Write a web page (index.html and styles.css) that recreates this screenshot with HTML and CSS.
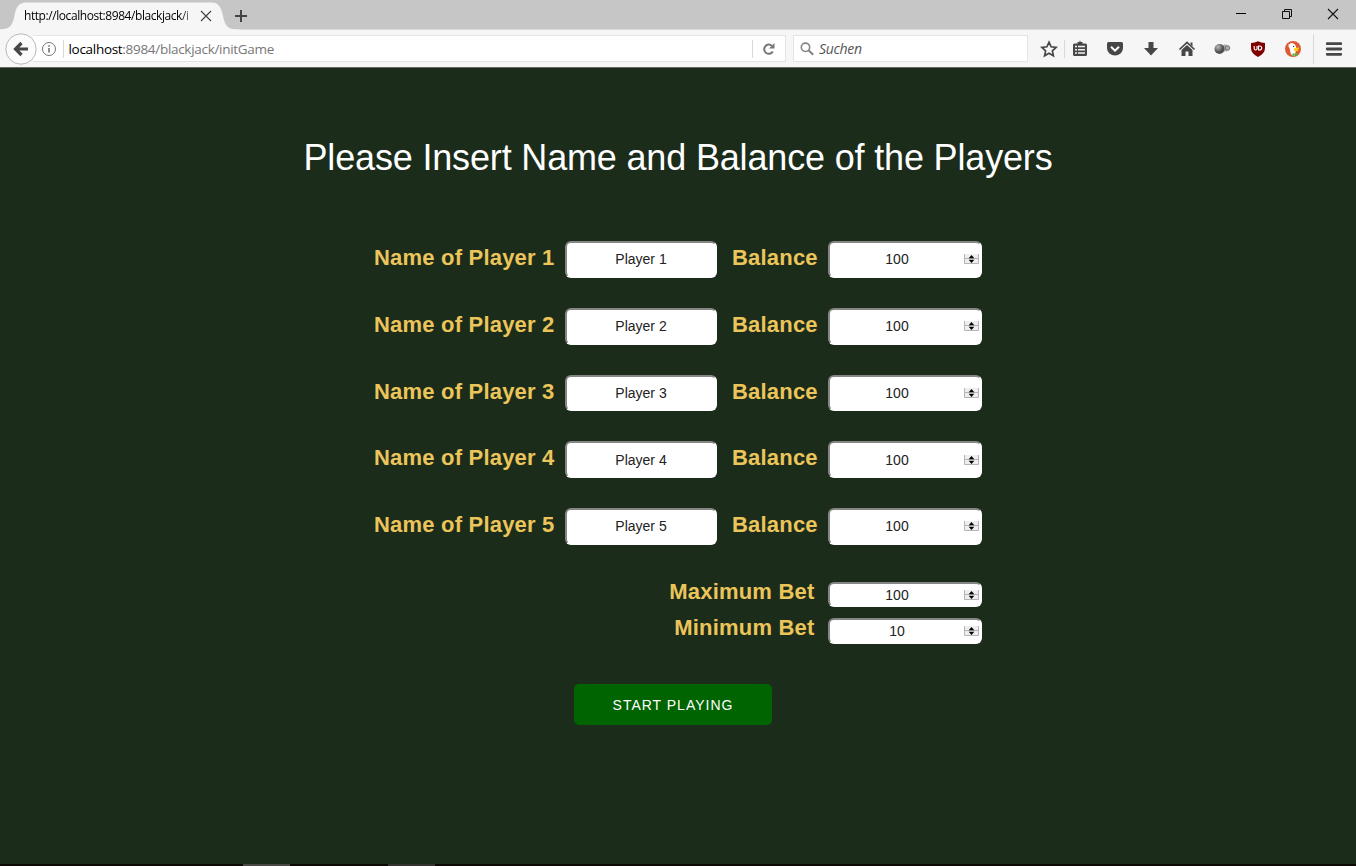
FILE: index.html
```html
<!DOCTYPE html>
<html lang="en">
<head>
<meta charset="utf-8">
<title>Blackjack</title>
<link rel="stylesheet" href="styles.css">
</head>
<body>
<header class="tabs">
  <svg class="tab-shape" width="240" height="30" viewBox="0 0 240 30"><path d="M0 30V29.5C9 29.500 12 26 14 18C16 7 18 2.500 27 2.500H211C219 2.500 221 7 223 16C225 26 228 29.500 237 29.500H240V30Z" fill="#f6f6f6"/></svg>
  <span class="tab-title">http://localhost:8984/blackjack/i</span>
  <svg class="tab-close" width="12" height="12" viewBox="0 0 12 12"><path d="M1 1l10 10M11 1L1 11" stroke="#444" stroke-width="1.2"/></svg>
  <svg class="tab-new" width="14" height="14" viewBox="0 0 14 14"><path d="M7 1v12M1 7h12" stroke="#444" stroke-width="2"/></svg>
  <div class="window-buttons">
    <svg width="12" height="12" viewBox="0 0 12 12"><path d="M1 5.500h10" stroke="#000"/></svg>
    <svg width="12" height="12" viewBox="0 0 12 12"><path d="M1.500 3.500h7v7h-7zM3.500 3.500v-2h7v7h-2" fill="none" stroke="#111"/></svg>
    <svg width="12" height="12" viewBox="0 0 12 12"><path d="M1 1l10 10M11 1L1 11" stroke="#111" stroke-width="1.100"/></svg>
  </div>
</header>
<nav class="toolbar">
  <svg class="back" width="32" height="32" viewBox="0 0 32 32"><circle cx="16" cy="16" r="15.200" fill="#fbfbfb" stroke="#b9b9b9"/><path d="M16.500 10L10.500 16l6 6M11.500 16H23" fill="none" stroke="#474747" stroke-width="3.200"/></svg>
  <div class="address">
    <svg class="info" width="16" height="16" viewBox="0 0 16 16"><circle cx="8" cy="8" r="6.500" fill="none" stroke="#777"/><path d="M8 7v4.500M8 4.300v1.500" stroke="#666" stroke-width="1.500"/></svg>
    <i class="line info-line"></i>
    <span class="url"><b>localhost</b>:8984/blackjack/initGame</span>
    <i class="line reload-line"></i>
    <svg class="reload" width="14" height="14" viewBox="0 0 14 14"><path d="M10.800 9.500A4.600 4.600 0 1 1 10 3.900" fill="none" stroke="#777" stroke-width="2"/><path d="M12.500 1v5.500H7z" fill="#777"/></svg>
  </div>
  <div class="search">
    <svg width="14" height="14" viewBox="0 0 14 14"><circle cx="5.500" cy="5.300" r="4.200" fill="none" stroke="#858585" stroke-width="1.600"/><path d="M8.500 8.300l4.700 4.400" stroke="#858585" stroke-width="2.200"/></svg>
    <span class="search-text">Suchen</span>
  </div>
  <div class="tools">
    <svg width="18" height="18" viewBox="0 0 18 18"><path d="M9 2.200l2.100 4.600 5 .6-3.700 3.400 1 5L9 13.300l-4.400 2.500 1-5L1.900 7.400l5-.6z" fill="none" stroke="#474747" stroke-width="1.700"/></svg>
    <svg width="18" height="18" viewBox="0 0 18 18"><path d="M3.500 3.500H6.500V2h2V.8h1V2h2v1.500h3Q16 3.500 16 5v9.500q0 1.500-1.500 1.500h-11Q2 16 2 14.500V5Q2 3.500 3.500 3.500z" fill="#474747"/><path d="M4 6.600h2M7 6.600h7M4 9.800h2M7 9.800h7M4 13h2M7 13h7" stroke="#f3f3f3" stroke-width="1.500"/></svg>
    <svg width="18" height="18" viewBox="0 0 18 18"><path d="M2.500 2h13Q17 2 17 3.500V8A8 7.500 0 0 1 1 8V3.500Q1 2 2.500 2z" fill="#474747"/><path d="M5 6.800l4 3.900 4-3.900" fill="none" stroke="#fff" stroke-width="2"/></svg>
    <svg width="18" height="18" viewBox="0 0 18 18"><path d="M6.500 2h5v6H16l-7 7.500L2 8h4.500z" fill="#474747"/></svg>
    <svg width="18" height="18" viewBox="0 0 18 18"><path d="M1.500 9.500L9 2.500l7.500 7" fill="none" stroke="#474747" stroke-width="1.700"/><path d="M3.500 10L9 5l5.500 5v6h-4v-4.500h-3V16h-4zM12.500 2.500h2v4l-2-2z" fill="#474747"/></svg>
    <svg width="18" height="18" viewBox="0 0 18 18"><defs><radialGradient id="ball" cx=".35" cy=".3"><stop offset="0" stop-color="#bbb"/><stop offset="1" stop-color="#505050"/></radialGradient></defs><circle cx="12" cy="8" r="3.500" fill="#aaa"/><circle cx="6.500" cy="9" r="5" fill="url(#ball)"/><circle cx="14.500" cy="8" r="2.300" fill="#aaa" stroke="#777"/></svg>
    <svg width="18" height="18" viewBox="0 0 18 18"><path d="M9 1.200q3 1.800 7 1.800v5q0 5.500-7 9-7-3.500-7-9V3q4 0 7-1.800z" fill="#800000"/><path d="M5.200 6v2.500q0 1.500 1.400 1.500T8 8.500V6M9.500 6v4h1q2.200 0 2.200-2t-2.200-2z" fill="none" stroke="#fff" stroke-width="1.100"/></svg>
    <svg width="18" height="18" viewBox="0 0 18 18"><circle cx="9" cy="9" r="8" fill="#de5833"/><path d="M4.500 4.500Q8 1.500 11 4.500q1.500 1.800 1 5l-.5 3-1 3.500Q6.500 16 6.200 11 6 8 4.500 6.500z" fill="#fff"/><circle cx="9.500" cy="6.500" r=".7" fill="#345"/><path d="M10 8.300l5-.8v1.200L13 9.500l2 .4-1.500 1.300-3.500-.4z" fill="#fdd20a"/><path d="M8.500 13l2.500 1 2.500-1v3l-2.500-.8-2.500 1z" fill="#4cba3c"/></svg>
    <svg width="18" height="18" viewBox="0 0 18 18"><path d="M2.200 3.700h13.600M2.200 9h13.600M2.200 14.300h13.600" stroke="#474747" stroke-width="2.800" stroke-linecap="round"/></svg>
    <i class="line star-line"></i>
    <i class="line menu-line"></i>
  </div>
</nav>
<main class="page">
  <h1 class="heading">Please Insert Name and Balance of the Players</h1>
  <form class="players">
    <div class="row"><label class="label">Name of Player 1</label><input class="field" value="Player 1"><label class="label balance">Balance</label><span class="number"><input class="field" value="100"><svg class="spin" width="15" height="10" viewBox="0 0 15 10"><use href="#spinner"/></svg></span></div>
    <div class="row"><label class="label">Name of Player 2</label><input class="field" value="Player 2"><label class="label balance">Balance</label><span class="number"><input class="field" value="100"><svg class="spin" width="15" height="10" viewBox="0 0 15 10"><use href="#spinner"/></svg></span></div>
    <div class="row"><label class="label">Name of Player 3</label><input class="field" value="Player 3"><label class="label balance">Balance</label><span class="number"><input class="field" value="100"><svg class="spin" width="15" height="10" viewBox="0 0 15 10"><use href="#spinner"/></svg></span></div>
    <div class="row"><label class="label">Name of Player 4</label><input class="field" value="Player 4"><label class="label balance">Balance</label><span class="number"><input class="field" value="100"><svg class="spin" width="15" height="10" viewBox="0 0 15 10"><use href="#spinner"/></svg></span></div>
    <div class="row"><label class="label">Name of Player 5</label><input class="field" value="Player 5"><label class="label balance">Balance</label><span class="number"><input class="field" value="100"><svg class="spin" width="15" height="10" viewBox="0 0 15 10"><use href="#spinner"/></svg></span></div>
    <div class="bet"><label class="label">Maximum Bet</label><span class="number"><input class="field" value="100"><svg class="spin" width="15" height="10" viewBox="0 0 15 10"><use href="#spinner"/></svg></span></div>
    <div class="bet"><label class="label">Minimum Bet</label><span class="number"><input class="field" value="10"><svg class="spin" width="15" height="10" viewBox="0 0 15 10"><use href="#spinner"/></svg></span></div>
    <button class="start" type="button">START PLAYING</button>
  </form>
</main>
<footer class="taskbar"><i class="task task-active"></i><i class="task task-open"></i></footer>
<svg width="0" height="0" class="symbols"><symbol id="spinner" viewBox="0 0 15 10"><path d="M.5 0v9.500h14V0M.5 4.500h14" fill="#eee" stroke="#b5b5b5"/><path d="M7.500 1L10.300 4.300H4.700zM4.700 5.700h5.600L7.500 9z" fill="#000"/></symbol></svg>
</body>
</html>
```
FILE: styles.css
```css
* { box-sizing: border-box; }
body { margin: 0; height: 866px; overflow: hidden; display: flex; flex-direction: column; background: #1b2c1b; font-family: "Liberation Sans", Arial, sans-serif; }
svg { display: block; flex: none; }
.symbols { position: absolute; }
.tabs { position: relative; display: flex; align-items: center; height: 30px; background: #c6c6c6; border-bottom: 1px solid #dcdcdc; flex: none; }
.tab-shape { position: absolute; left: 0; top: 0; }
.tab-title { position: relative; margin: 3px 0 0 24px; width: 168px; white-space: nowrap; font: 12px/18px "Open Sans", sans-serif; letter-spacing: -0.43px; color: #000; -webkit-mask-image: linear-gradient(90deg, #000 156px, transparent 175px); mask-image: linear-gradient(90deg, #000 156px, transparent 175px); }
.tab-close { position: relative; margin: 2px 0 0 8px; }
.tab-new { margin: 2px 0 0 22px; }
.window-buttons { display: flex; gap: 34px; margin: 0 17px 0 auto; }
.window-buttons svg { position: relative; top: -1px; }
.toolbar { display: flex; align-items: center; height: 38px; padding: 0 0 0 5px; background: #f6f6f6; flex: none; border-bottom: 1px solid #626a62; }
.back { position: relative; z-index: 1; }
.address { display: flex; align-items: center; width: 753px; height: 27px; margin-left: -4px; padding-left: 8px; background: #fff; border: 1px solid #e4e4e4; border-left: 0; }
.line { width: 1px; height: 18px; background: #d9d9d9; flex: none; }
.info-line { margin-left: 6px; }
.url { margin: 1px 0 0 4.500px; font: 13.500px/20px "Open Sans", sans-serif; letter-spacing: -0.3px; color: #777; white-space: nowrap; }
.url b { font-weight: 400; color: #000; }
.reload-line { margin-left: auto; }
.reload { margin: 0 9px 0 9px; }
.search { display: flex; align-items: center; width: 235px; height: 27px; margin-left: 7px; padding-left: 6px; background: #fff; border: 1px solid #e4e4e4; }
.search-text { margin: 1px 0 0 5px; font: italic 14px/20px "Open Sans", sans-serif; letter-spacing: -0.3px; color: #555; }
.tools { position: relative; display: flex; gap: 17.600px; margin-left: 12px; }
.tools svg:first-child { margin-right: -4.800px; }
.tools svg:nth-child(9) { margin-left: 5.500px; }
.star-line { position: absolute; left: 24px; top: 0; }
.menu-line { position: absolute; left: 273px; top: -6px; height: 30px; }
.page { flex: 1; display: flex; flex-direction: column; align-items: center; padding-top: 69px; }
.heading { margin: 0; width: 749px; font-size: 36px; line-height: 42px; font-weight: 400; letter-spacing: -0.165px; color: #fff; white-space: nowrap; }
.players { width: 608px; margin: 62px 0 0; }
.row { display: grid; grid-template-columns: 191px 152px 111px 154px; height: 36.750px; margin-bottom: 30px; }
.label { font-size: 22px; line-height: 26px; padding-top: 4px; font-weight: 700; letter-spacing: 0.2px; color: #ecc55a; white-space: nowrap; }
.balance { padding-left: 15px; }
.number { position: relative; display: block; height: 100%; }
.field { display: block; width: 100%; height: 100%; margin: 0; padding: 1px 2px; border: solid #fff; border-width: 2px; border-top-color: #868686; border-left-color: #868686; border-radius: 6px; background: #fff; font: 14px "Liberation Sans", Arial, sans-serif; color: #222; text-align: center; }
.number .field { padding-right: 18px; }
.spin { position: absolute; right: 3px; top: calc(50% - 5px); }
.bet { display: grid; grid-template-columns: 454px 154px; height: 25.500px; margin: 0 0 11.200px; }
.row + .bet { margin-top: 37px; }
.bet .label { text-align: right; padding: 0 13.500px 0 0; margin-top: -3px; }
.start { display: block; width: 198px; height: 41px; margin: 40.300px 0 0 200px; border: 0; border-radius: 5px; background: #006400; color: #fff; font: 14px "Liberation Sans", Arial, sans-serif; letter-spacing: 1px; }
.taskbar { display: flex; gap: 98px; height: 2px; flex: none; padding-left: 243px; background: #0d0904; }
.task { width: 47px; background: #35332f; }
.task-active { background: #4a4844; }
```
